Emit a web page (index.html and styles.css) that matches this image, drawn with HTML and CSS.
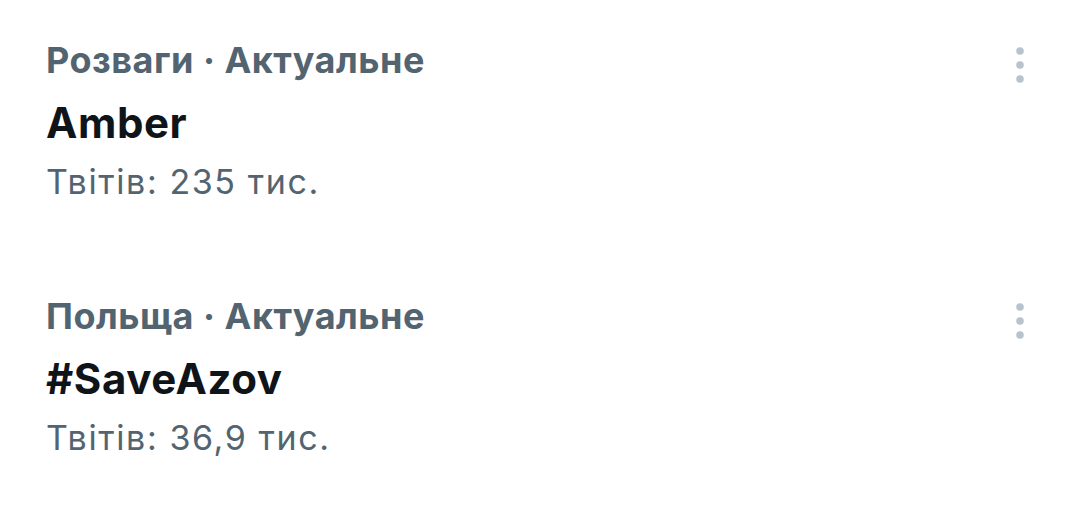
FILE: index.html
```html
<!DOCTYPE html>
<html lang="uk">
<head>
<meta charset="utf-8">
<title>Актуальне</title>
<link rel="stylesheet" href="styles.css">
</head>
<body>
<section class="trends">
  <article class="trend">
    <div class="trend-body">
      <div class="trend-meta">Розваги · Актуальне</div>
      <div class="trend-title">Amber</div>
      <div class="trend-count">Твітів: 235 тис.</div>
    </div>
    <svg class="trend-more" width="8" height="36" viewBox="0 0 8 36" aria-hidden="true">
      <circle cx="4" cy="4" r="3.8"/>
      <circle cx="4" cy="18" r="3.8"/>
      <circle cx="4" cy="32" r="3.8"/>
    </svg>
  </article>
  <article class="trend">
    <div class="trend-body">
      <div class="trend-meta">Польща · Актуальне</div>
      <div class="trend-title">#SaveAzov</div>
      <div class="trend-count">Твітів: 36,9 тис.</div>
    </div>
    <svg class="trend-more" width="8" height="36" viewBox="0 0 8 36" aria-hidden="true">
      <circle cx="4" cy="4" r="3.8"/>
      <circle cx="4" cy="18" r="3.8"/>
      <circle cx="4" cy="32" r="3.8"/>
    </svg>
  </article>
</section>
</body>
</html>
```

FILE: styles.css
```css
html, body {
  margin: 0;
  padding: 0;
  background: #ffffff;
}

body {
  font-family: Inter, "Liberation Sans", Arial, sans-serif;
  width: 1080px;
  height: 521px;
  overflow: hidden;
}

.trends {
  display: flex;
  flex-direction: column;
}

.trend {
  display: flex;
  justify-content: space-between;
  align-items: flex-start;
  height: 256px;
  box-sizing: border-box;
  padding: 38px 56px 0 46px;
}

.trend-body {
  display: flex;
  flex-direction: column;
}

.trend-meta {
  font-size: 36px;
  line-height: 44px;
  font-weight: 700;
  letter-spacing: 0.5px;
  color: #536471;
}

.trend-title {
  margin-top: 16px;
  font-size: 42px;
  line-height: 50px;
  font-weight: 700;
  letter-spacing: 0.6px;
  color: #0f1419;
}

.trend-count {
  margin-top: 12px;
  font-size: 34px;
  line-height: 44px;
  letter-spacing: 1.6px;
  color: #536471;
}

.trend-more {
  margin-top: 9px;
  fill: #b9c3cc;
}
```
